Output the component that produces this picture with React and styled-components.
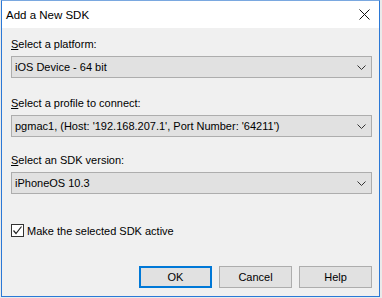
import React, { useState } from 'react';
import styled, { createGlobalStyle } from 'styled-components';

const GlobalStyle = createGlobalStyle`
    html, body {
        margin: 0;
        padding: 0;
        background: #eaeaea;
    }
    body {
        font-family: "Liberation Sans", Arial, sans-serif;
        font-size: 11px;
        color: #000;
    }
`;

const Window = styled.div`
    box-sizing: border-box;
    width: 379px;
    height: 297px;
    margin-left: 1px;
    border: 1px solid #2b78d6;
    border-top-color: #7aa8e0;
    background: #f0f0f0;
    display: flex;
    flex-direction: column;
`;

const TitleBar = styled.div`
    height: 27px;
    background: #fff;
    display: flex;
    align-items: center;
    justify-content: space-between;
    padding: 0 0 0 4px;
    font-size: 11.5px;
`;

const CloseButton = styled.div`
    width: 30px;
    height: 27px;
    display: flex;
    align-items: center;
    justify-content: center;
`;

const Body = styled.div`
    flex: 1;
    padding: 8px 7px 0 9px;
    display: flex;
    flex-direction: column;
`;

const Label = styled.div`
    line-height: 16px;
    height: 16px;
    margin-top: ${props => props.gap || 0}px;
    margin-bottom: 4px;
`;

const Key = styled.span`
    text-decoration: underline;
    text-underline-offset: 1px;
`;

const Select = styled.div`
    box-sizing: border-box;
    height: 22px;
    width: 361px;
    border: 1px solid #adadad;
    background: #e1e1e1;
    display: flex;
    align-items: center;
    justify-content: space-between;
    padding: 0 5px 0 3px;
    white-space: nowrap;
`;

const CheckRow = styled.label`
    display: flex;
    align-items: center;
    gap: 3px;
    margin-top: 30px;
    height: 13px;
`;

const CheckBox = styled.span`
    box-sizing: border-box;
    width: 13px;
    height: 13px;
    border: 1px solid #333;
    background: #fff;
    display: flex;
    align-items: center;
    justify-content: center;
`;

const Buttons = styled.div`
    display: flex;
    justify-content: flex-end;
    gap: 7px;
    margin-top: auto;
    margin-bottom: 8px;
`;

const Button = styled.div`
    box-sizing: border-box;
    width: 73px;
    height: 22px;
    border: ${props => props.primary ? '2px solid #0078d7' : '1px solid #adadad'};
    background: #e1e1e1;
    display: flex;
    align-items: center;
    justify-content: center;
`;

const Chevron = () => (
    <svg width="9" height="5" viewBox="0 0 9 5">
        <path d="M0.5 0.5 L4.5 4.5 L8.5 0.5" fill="none" stroke="#333" strokeWidth="1" />
    </svg>
);

export default function App() {
    const [active, setActive] = useState(true);

    return (
        <>
            <GlobalStyle />
            <Window>
                <TitleBar>
                    <span>Add a New SDK</span>
                    <CloseButton>
                        <svg width="11" height="11" viewBox="0 0 11 11">
                            <path d="M0.5 0.5 L10.5 10.5 M10.5 0.5 L0.5 10.5" stroke="#111" strokeWidth="1" />
                        </svg>
                    </CloseButton>
                </TitleBar>
                <Body>
                    <Label><Key>S</Key>elect a platform:</Label>
                    <Select>
                        <span>iOS Device - 64 bit</span>
                        <Chevron />
                    </Select>
                    <Label gap={17}><Key>S</Key>elect a profile to connect:</Label>
                    <Select>
                        <span>pgmac1, (Host: '192.168.207.1', Port Number: '64211')</span>
                        <Chevron />
                    </Select>
                    <Label gap={15}><Key>S</Key>elect an SDK version:</Label>
                    <Select>
                        <span>iPhoneOS 10.3</span>
                        <Chevron />
                    </Select>
                    <CheckRow onClick={() => setActive(!active)}>
                        <CheckBox>
                            {active && (
                                <svg width="11" height="11" viewBox="0 0 11 11">
                                    <path d="M1.5 5.5 L4 8.5 L9.5 1.5" fill="none" stroke="#222" strokeWidth="1.2" />
                                </svg>
                            )}
                        </CheckBox>
                        <span>Make the selected SDK active</span>
                    </CheckRow>
                    <Buttons>
                        <Button primary>OK</Button>
                        <Button>Cancel</Button>
                        <Button>Help</Button>
                    </Buttons>
                </Body>
            </Window>
        </>
    );
}
